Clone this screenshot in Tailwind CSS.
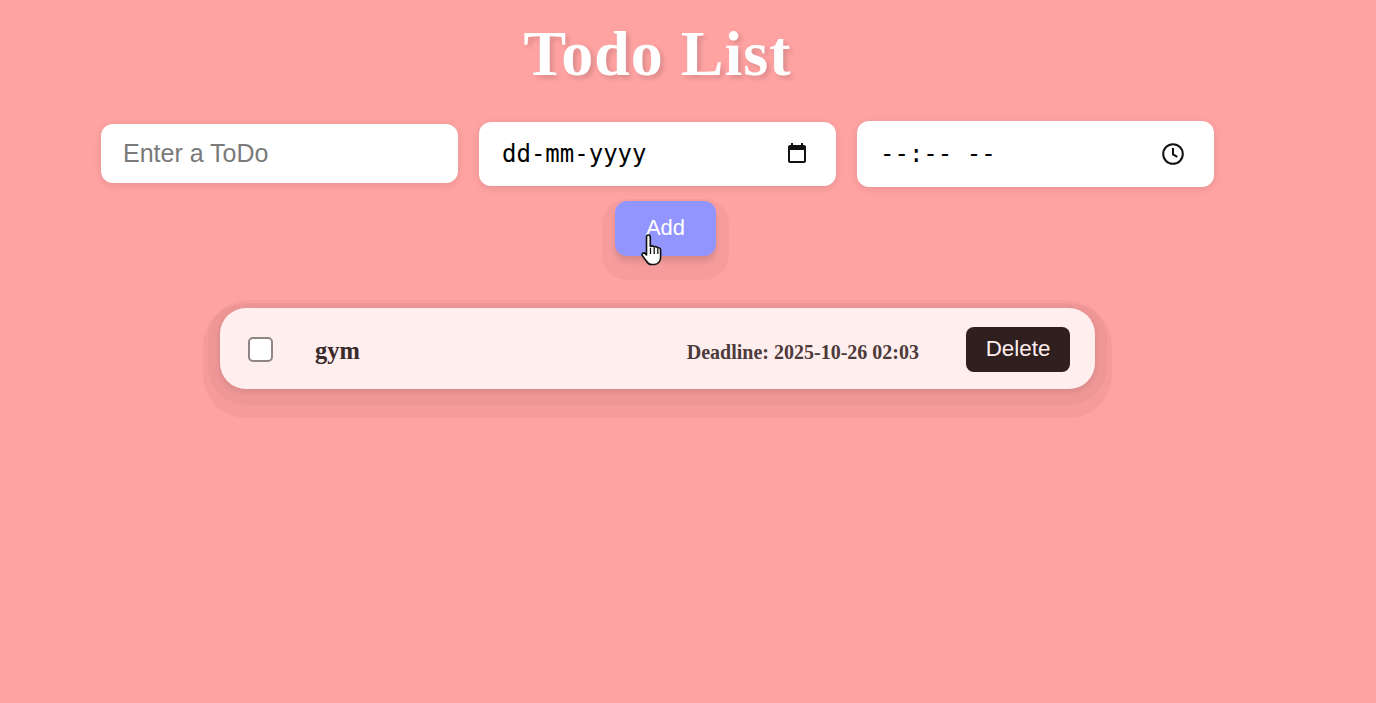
<!doctype html>
<html lang="en">
<head>
<meta charset="utf-8">
<title>Todo List</title>
<script src="https://cdn.jsdelivr.net/npm/@tailwindcss/browser@4"></script>
</head>
<body class="bg-[#ffa2a2] h-[703px] overflow-hidden font-['Liberation_Sans',sans-serif]">
<main class="w-[1315px] flex flex-col items-center pt-[17px]">
  <h1 class="font-['Liberation_Serif',serif] font-bold text-[64px] leading-[74px] tracking-[1px] text-white [text-shadow:3px_3px_5px_rgba(0,0,0,0.15)]">Todo List</h1>
  <div class="mt-[30px] flex items-center gap-[21px] h-[66px]">
    <input type="text" placeholder="Enter a ToDo" class="w-[357px] h-[59px] -mt-[2px] rounded-[12px] bg-white px-[22px] text-[25px] text-black placeholder:text-[#7a7a7a] outline-none shadow-[0_2px_8px_rgba(0,0,0,0.1)]">
    <div class="w-[357px] h-[64px] rounded-[12px] bg-white pl-[23px] pr-[27px] flex items-center justify-between shadow-[0_2px_8px_rgba(0,0,0,0.1)]">
      <span class="font-['DejaVu_Sans_Mono',monospace] text-[24px] text-black">dd-mm-yyyy</span>
      <svg class="w-[24px] h-[24px]" viewBox="0 0 24 24" fill="none"><path fill="#111" d="M19 3h-1V1h-2v2H8V1H6v2H5c-1.100 0-2 .9-2 2v14c0 1.100.9 2 2 2h14c1.100 0 2-.9 2-2V5c0-1.100-.9-2-2-2zm0 16H5V8h14v11z"/></svg>
    </div>
    <div class="w-[357px] h-[66px] rounded-[12px] bg-white pl-[23px] pr-[29px] flex items-center justify-between shadow-[0_2px_8px_rgba(0,0,0,0.1)]">
      <span class="font-['DejaVu_Sans_Mono',monospace] text-[24px] text-black whitespace-pre">--:-- --</span>
      <svg class="w-[24px] h-[24px]" viewBox="0 0 24 24" fill="none" stroke="#111" stroke-width="2"><circle cx="12" cy="12" r="9.8"/><path d="M12 6v6.300l4.300 2.500"/></svg>
    </div>
  </div>
  <div class="relative mt-[14px] ml-[16px]">
    <button class="w-[101px] h-[55px] pb-[3px] rounded-[12px] bg-[#9395ff] text-white text-[22px] shadow-[0_6px_5px_rgba(0,0,0,0.1),0_11px_0_13px_rgba(0,0,0,0.035)]">Add</button>
    <svg class="absolute left-[26px] top-[33px] w-[22px] h-[33px]" viewBox="0 0 22 33"><path fill="#fff" stroke="#111" stroke-width="1.6" stroke-linejoin="round" d="M5.500 3.200c0-3 3.800-3 3.800 0v9.300c1.500-.9 3.200-.6 3.900.5 1.200-.7 2.900-.3 3.400.9 1.400-.5 3 .4 3 2.100v7.500c0 3.500-2.300 7-6.300 7h-2.800c-2.600 0-4-1.500-5.200-3.500L1.300 21.500c-1-1.700 1.400-3.600 2.900-1.900l1.300 1.400z"/><path stroke="#111" stroke-width="1.300" d="M9.500 14v6M13.200 14v6M16.800 15v5"/></svg>
  </div>
  <ul class="mt-[52px]">
    <li class="w-[875px] h-[81px] rounded-[26px] bg-[#ffeeee] flex items-center pl-[28px] pr-[25px] font-['Liberation_Serif',serif] font-bold shadow-[0_2px_6px_rgba(0,0,0,0.12),0_4px_0_12px_rgba(0,0,0,0.025),0_12px_0_17px_rgba(0,0,0,0.04)]">
      <input type="checkbox" class="appearance-none w-[25px] h-[25px] rounded-[5px] border-2 border-[#8f8585] bg-white mt-[1px]">
      <span class="ml-[42px] text-[24.500px] leading-none text-[#3a2a2a] mt-[6px]">gym</span>
      <span class="ml-auto text-[20px] text-[#4d3a3a] mt-[7px]">Deadline: 2025-10-26 02:03</span>
      <button class="ml-[47px] w-[104px] h-[45px] rounded-[8px] bg-[#2f1f1f] text-[#ffeeee] text-[22.400px] font-['Liberation_Sans',sans-serif] font-normal mt-[1px]">Delete</button>
    </li>
  </ul>
</main>
</body>
</html>
